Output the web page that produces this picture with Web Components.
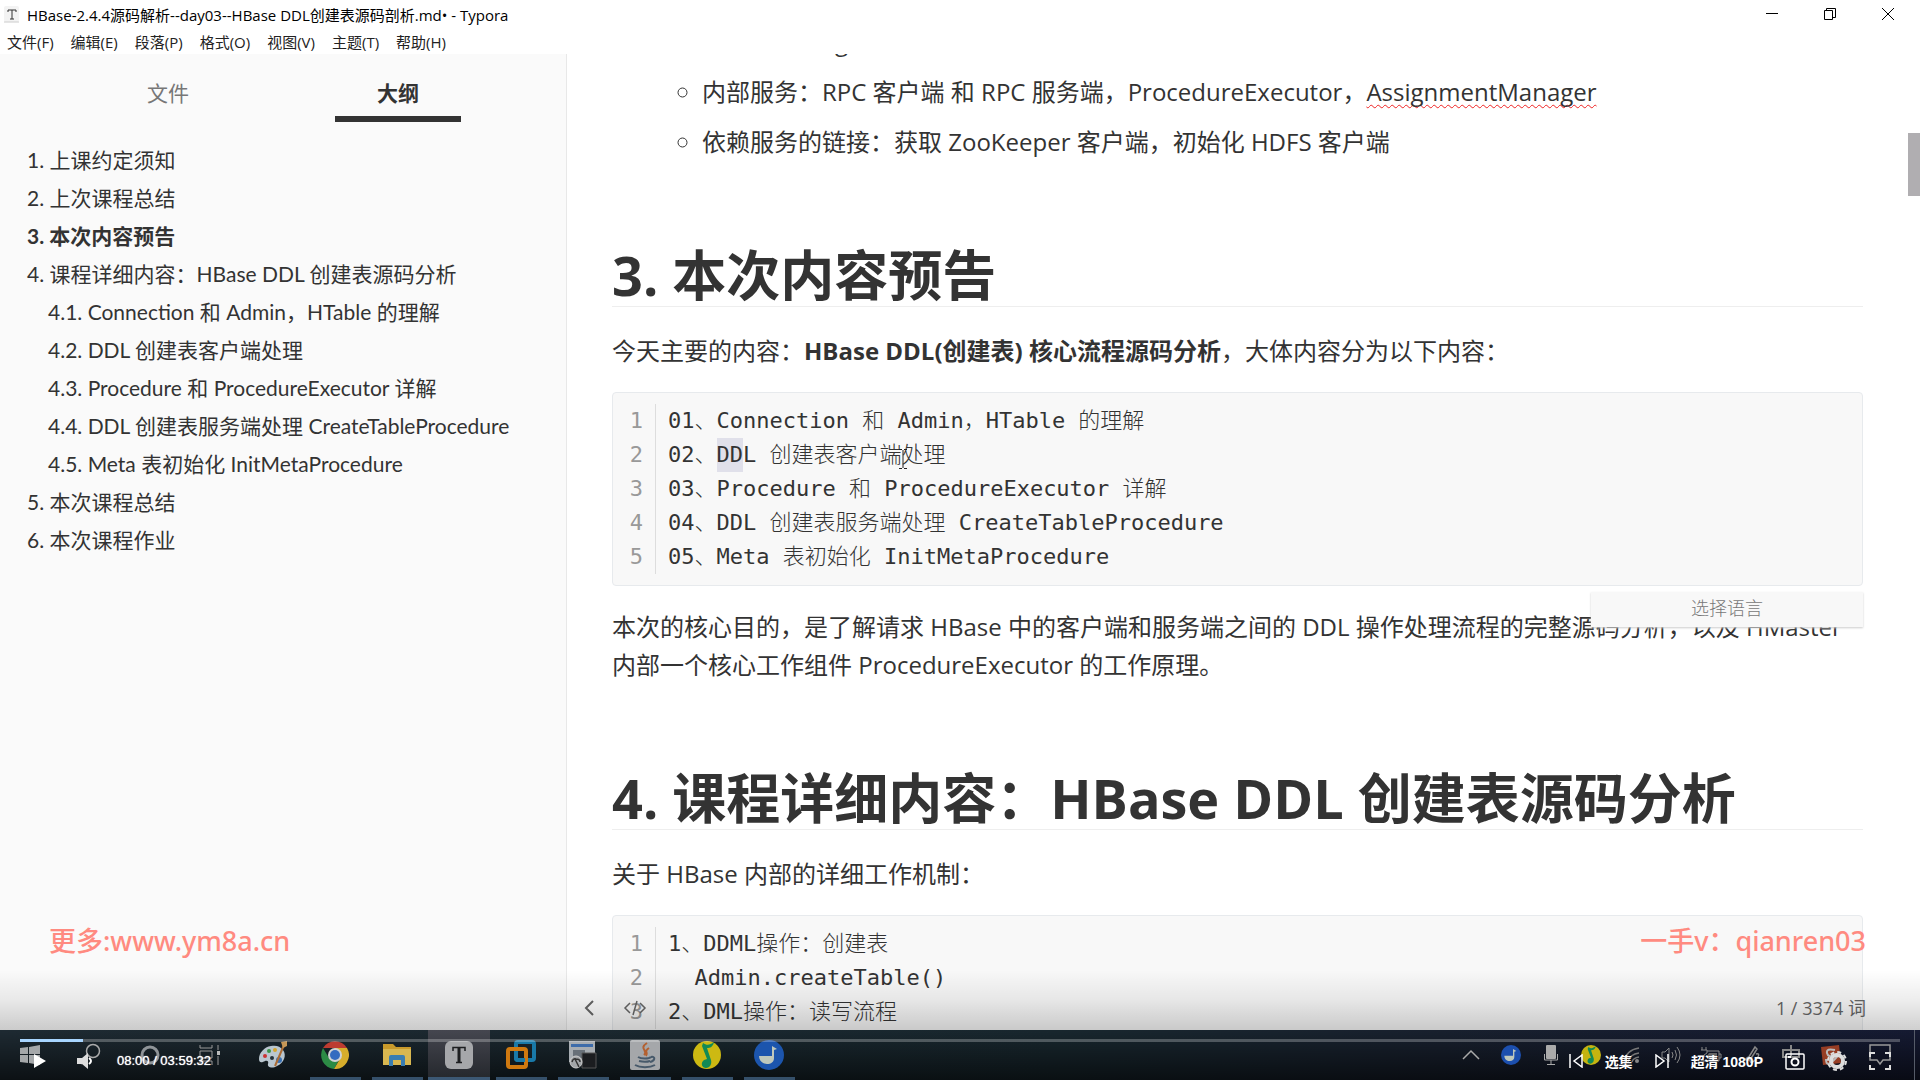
<!DOCTYPE html>
<html lang="zh-CN">
<head>
<meta charset="utf-8">
<title>HBase-2.4.4源码解析--day03--HBase DDL创建表源码剖析.md• - Typora</title>
<style>
  html, body{
    height: 100%;
    margin: 0;
  }

  body{
    overflow: hidden;
    background: #fff;
    color: #333;
    font-family: "Open Sans", "Noto Sans CJK SC", sans-serif;
  }
</style>
</head>
<body>
<video-stage></video-stage>

<script>
class Base extends HTMLElement{
  constructor(){
    super();

    this.attachShadow({ mode: 'open' });
    this.shadowRoot.innerHTML = this.constructor.template;
  }
}

function define(element){
  window.customElements.define(element.is, element);
}


class WindowHeader extends Base{
  static get is(){
    return 'window-header';
  }

  static get template(){
    return `
      <style>
        :host{
          display: block;
          background: #fff;
          color: #000;
          font-size: 15px;
        }

        header, nav, .buttons{
          display: flex;
          align-items: center;
        }

        header{
          height: 28px;
          padding: 0 3px 0 4px;
          gap: 7px;
        }

        h1{
          flex: 1;
          margin: 0;
          font-size: 15px;
          font-weight: 400;
        }

        nav{
          height: 26px;
          padding-left: 7px;
          gap: 17px;
        }

        button{
          border: 0;
          padding: 0;
          background: none;
          font: inherit;
          color: #222;
        }

        .buttons button{
          width: 58px;
          height: 28px;
        }

        svg{
          display: block;
          margin: auto;
        }
      </style>

      <header>
        <svg width="16" height="18" viewBox="0 0 16 18">
          <rect x="0" y="1" width="15" height="16" rx="2" fill="#f3f3f3"/>
          <path d="M0 17h15" stroke="#ccc"/>
          <path d="M4 7V5h8v2M8 5v9M6 14h4" stroke="#333" fill="none"/>
        </svg>
        <h1><slot></slot></h1>
        <div class="buttons">
          <button aria-label="最小化"><svg width="14" height="16"><path d="M1 7.500h12" stroke="#000"/></svg></button>
          <button aria-label="还原"><svg width="14" height="16"><path d="M1.500 4.500h8v9h-8zM3.500 4.500v-2h9v9h-3" stroke="#000" fill="none"/></svg></button>
          <button aria-label="关闭"><svg width="14" height="16"><path d="M1 2l12 12M13 2L1 14" stroke="#000"/></svg></button>
        </div>
      </header>
      <nav><slot name="menu"></slot></nav>
    `;
  }
}


class MenuButton extends Base{
  static get is(){
    return 'menu-button';
  }

  static get template(){
    return `
      <style>
        :host{
          display: block;
        }

        button{
          border: 0;
          padding: 0;
          background: none;
          font: inherit;
          color: #222;
        }
      </style>
      <button><slot></slot></button>
    `;
  }
}


class OutlineItem extends Base{
  static get is(){
    return 'outline-item';
  }

  static get template(){
    return `
      <style>
        :host{
          display: block;
          line-height: 38px;
          white-space: nowrap;
        }

        :host([level="2"]){
          padding-left: 21px;
        }

        :host([active]){
          font-weight: 700;
        }

        a{
          color: inherit;
          text-decoration: none;
        }
      </style>
      <a href="#"><slot></slot></a>
    `;
  }
}


class OutlinePanel extends Base{
  static get is(){
    return 'outline-panel';
  }

  static get template(){
    return `
      <style>
        :host{
          display: block;
          box-sizing: border-box;
          background: #fafafa;
          border-right: 1px solid #e8e8e8;
          font-family: Lato, "Noto Sans CJK SC", sans-serif;
          font-size: 21px;
        }

        .tabs{
          display: flex;
          padding: 18px 53px 0;
          margin-bottom: 19px;
        }

        button{
          flex: 1;
          display: flex;
          flex-direction: column;
          align-items: center;
          gap: 2px;
          border: 0;
          padding: 0;
          background: none;
          font: inherit;
          line-height: 42px;
          color: #777;
        }

        button[aria-selected=true]{
          font-weight: 700;
          color: #333;
        }

        button::after{
          content: '';
          width: 126px;
          height: 6px;
        }

        button[aria-selected=true]::after{
          background: #333;
        }

        .list{
          padding: 0 27px;
        }
      </style>

      <div class="tabs" role="tablist">
        <button role="tab" aria-selected="false">文件</button>
        <button role="tab" aria-selected="true">大纲</button>
      </div>
      <div class="list"><slot></slot></div>
    `;
  }
}


class CodeLine extends Base{
  static get is(){
    return 'code-line';
  }

  static get template(){
    return `
      <style>
        :host{
          display: flex;
          line-height: 34px;
          white-space: pre;
        }

        .num{
          width: 30px;
          padding-right: 12px;
          margin-right: 12px;
          border-right: 1px solid #ddd;
          text-align: right;
          color: #999;
        }

        ::slotted(mark){
          display: inline-block;
          background: #e0e0ea;
          color: inherit;
        }
      </style>
      <span class="num"></span><span><slot></slot></span>
    `;
  }

  connectedCallback(){
    this.shadowRoot.querySelector('.num').innerText = this.getAttribute('n');
  }
}


class CodeFence extends Base{
  static get is(){
    return 'code-fence';
  }

  static get template(){
    return `
      <style>
        :host{
          display: block;
          position: relative;
          margin: 22px 0;
          padding: 11px 0;
          border: 1px solid #e7eaed;
          border-radius: 4px;
          background: #f8f8f8;
          font-family: "DejaVu Sans Mono", "Noto Sans CJK SC", monospace;
          font-size: 22px;
          font-weight: 300;
        }

        /* language picker hangs below the block, over the next paragraph */
        input{
          display: none;
          position: absolute;
          z-index: 1;
          top: calc(100% + 7px);
          right: -1px;
          width: 272px;
          height: 35px;
          box-sizing: border-box;
          border: 0;
          padding: 0 0 4px;
          background: #f8f8f8;
          box-shadow: 0 1px 2px #ccc;
          font: 18px "Open Sans", "Noto Sans CJK SC", sans-serif;
          font-weight: 300;
          text-align: center;
        }

        input::placeholder{
          color: #777;
        }

        .caret{
          display: none;
          position: absolute;
          left: 286px;
          top: 56px;
        }

        :host([focused]) input, :host([focused]) .caret{
          display: block;
        }
      </style>
      <slot></slot>
      <svg class="caret" width="8" height="20"><path d="M0 .5h3M5 .5h3M4 1v18M0 19.500h3M5 19.500h3" stroke="#222" fill="none"/></svg>
      <input placeholder="选择语言" aria-label="选择语言">
    `;
  }
}


class MarkdownEditor extends Base{
  static get is(){
    return 'markdown-editor';
  }

  static get template(){
    return `
      <style>
        :host{
          display: block;
          position: relative;
          overflow: hidden;
          background: #fff;
        }

        article{
          margin: -31px 57px 0 45px;
          font-size: 24px;
          line-height: 38px;
        }

        ul{
          display: flex;
          flex-direction: column;
          gap: 12px;
          margin: 0;
          padding-left: 90px;
          list-style: circle;
        }

        .above{
          padding-left: 133px;
          list-style: none;
        }

        h1{
          margin: 83px 0 25px;
          border-bottom: 1px solid #eee;
          font-size: 54px;
          line-height: 62px;
        }

        p{
          margin: 22px 0;
        }

        u{
          text-decoration: underline wavy #e22 1px;
          text-underline-offset: 3px;
          text-decoration-skip-ink: none;
        }

        .thumb{
          position: absolute;
          right: 0;
          top: 79px;
          width: 12px;
          height: 63px;
          background: #b0aeb1;
        }

        footer{
          position: absolute;
          left: 16px;
          right: 54px;
          bottom: 8px;
          display: flex;
          align-items: center;
          gap: 28px;
          font-size: 18px;
          line-height: 28px;
          color: #666;
        }

        footer button{
          border: 0;
          padding: 0;
          background: none;
        }

        footer svg{
          display: block;
        }

        footer span{
          margin-left: auto;
        }
      </style>

      <article>
        <ul>
          <li class="above">g</li>
          <li>内部服务：RPC 客户端 和 RPC 服务端，ProcedureExecutor，<u>AssignmentManager</u></li>
          <li>依赖服务的链接：获取 ZooKeeper 客户端，初始化 HDFS 客户端</li>
        </ul>

        <h1>3. 本次内容预告</h1>
        <p>今天主要的内容：<b>HBase DDL(创建表) 核心流程源码分析</b>，大体内容分为以下内容：</p>
        <code-fence focused>
          <code-line n="1">01、Connection 和 Admin，HTable 的理解</code-line>
          <code-line n="2">02、<mark>DD</mark>L 创建表客户端处理</code-line>
          <code-line n="3">03、Procedure 和 ProcedureExecutor 详解</code-line>
          <code-line n="4">04、DDL 创建表服务端处理 CreateTableProcedure</code-line>
          <code-line n="5">05、Meta 表初始化 InitMetaProcedure</code-line>
        </code-fence>
        <p>本次的核心目的，是了解请求 HBase 中的客户端和服务端之间的 DDL 操作处理流程的完整源码分析，以及 HMaster<br>内部一个核心工作组件 ProcedureExecutor 的工作原理。</p>

        <h1>4. 课程详细内容：HBase DDL 创建表源码分析</h1>
        <p>关于 HBase 内部的详细工作机制：</p>
        <code-fence>
          <code-line n="1">1、DDML操作：创建表</code-line>
          <code-line n="2">  Admin.createTable()</code-line>
          <code-line n="3">2、DML操作：读写流程</code-line>
        </code-fence>
      </article>

      <div class="thumb"></div>
      <footer>
        <button aria-label="侧边栏"><svg width="12" height="18"><path d="M10 2L3 9l7 7" stroke="#666" stroke-width="2" fill="none"/></svg></button>
        <button aria-label="源代码模式"><svg width="24" height="18"><path d="M7 4L2 9l5 5M17 4l5 5-5 5M14 2L10 16" stroke="#666" stroke-width="1.500" fill="none"/></svg></button>
        <span>1 / 3374 词</span>
      </footer>
    `;
  }
}


class TaskButton extends Base{
  static get is(){
    return 'task-button';
  }

  static get template(){
    return `
      <style>
        :host{
          display: block;
          width: 62px;
        }

        :host([plain]){
          width: 60px;
        }

        :host([tray]){
          width: 40px;
        }

        :host([wide]){
          width: 58px;
        }

        button{
          display: flex;
          align-items: center;
          justify-content: center;
          width: 100%;
          height: 50px;
          border: 0;
          padding: 0;
          background: none;
          box-sizing: border-box;
        }

        :host([running]) button{
          background: linear-gradient(#35506a, #35506a) center bottom / 51px 3px no-repeat;
        }

        :host([active]) button{
          background: linear-gradient(#3c5874, #3c5874) center bottom / 100% 3px no-repeat, linear-gradient(#45464f, #24272c);
        }
      </style>
      <button><slot></slot></button>
    `;
  }

  connectedCallback(){
    this.shadowRoot.querySelector('button').setAttribute('aria-label', this.getAttribute('label'));
  }
}


class TaskBar extends Base{
  static get is(){
    return 'task-bar';
  }

  static get template(){
    return `
      <style>
        :host{
          display: flex;
          height: 50px;
          background: linear-gradient(transparent, rgba(0, 0, 0, .6)), linear-gradient(90deg, #1e2a32, #18272e 55%, #18202e 75%, #151a32);
        }

        .apps{
          display: flex;
          margin-left: 2px;
        }

        .tray{
          display: flex;
          margin-left: auto;
          margin-right: 5px;
          padding-right: 5px;
          border-right: 1px solid #555b68;
        }

        svg{
          display: block;
          fill: none;
        }
      </style>

      <task-button plain label="开始"><svg width="20" height="20" viewBox="0 0 20 20"><path d="M0 3l8-1v7H0zM9 2l11-2v9H9zM0 10h8v8l-8-1zM9 10h11v10L9 18z" fill="#a5a8aa"/></svg></task-button>
      <task-button plain label="搜索"><svg width="24" height="24" viewBox="0 0 24 24"><circle cx="15" cy="8" r="6.500" stroke="#aaa" stroke-width="1.500"/><path d="M10 13l-7 8" stroke="#aaa" stroke-width="1.500"/></svg></task-button>
      <task-button plain label="Cortana"><svg width="22" height="22" viewBox="0 0 22 22"><circle cx="11" cy="11" r="8" stroke="#8f9498" stroke-width="3"/></svg></task-button>
      <task-button plain label="任务视图"><svg width="22" height="22" viewBox="0 0 22 22"><path d="M1 1v3h12V1M1 21v-4h12v4M1 7h12v7H1zM19 1v5M19 12v9" stroke="#999"/><path d="M18 7h3v4h-3z" fill="#bbb"/></svg></task-button>

      <div class="apps">
        <task-button label="画图"><svg width="30" height="30" viewBox="0 0 30 30">
          <path d="M13 6C6 7 1 13 1 19c0 5 4 3 6 2s4 0 3 3 4 5 9 2c7-3 10-11 6-16-3-4-7-5-12-4z" fill="#b9c6cf"/>
          <circle cx="7" cy="16" r="2" fill="#c33"/><circle cx="11" cy="11" r="2" fill="#3a9447"/><circle cx="17" cy="10" r="2" fill="#d5a52d"/><circle cx="21" cy="20" r="3" fill="#3a72b5"/><circle cx="14" cy="18" r="2" fill="#25323a"/>
          <path d="M26 5L17 26" stroke="#ad6d35" stroke-width="2"/><path d="M23 2l6-1v5l-4 2z" fill="#c59757"/>
        </svg></task-button>
        <task-button running label="Chrome"><svg width="28" height="28" viewBox="0 0 28 28">
          <path d="M2 7a14 14 0 0 1 24 0H14z" fill="#bd3b30"/>
          <path d="M2 7a14 14 0 0 0 11 21l6-11-11 0z" fill="#2c8b45"/>
          <path d="M26 7a14 14 0 0 1-13 21l7-12-6-9z" fill="#d6ad2b"/>
          <circle cx="14" cy="14" r="7" fill="#d0d2d4"/><circle cx="14" cy="14" r="5" fill="#356bc0"/>
        </svg></task-button>
        <task-button running label="文件资源管理器"><svg width="28" height="26" viewBox="0 0 28 26">
          <path d="M0 2h10l3 3h15v18H0z" fill="#c99a2b"/><path d="M0 7h28v16H0z" fill="#d8b750"/>
          <path d="M6 24v-9q0-2 2-2h12q2 0 2 2v9h-4v-6h-8v6z" fill="#397db1"/>
        </svg></task-button>
        <task-button active label="Typora"><svg width="28" height="28" viewBox="0 0 28 28">
          <rect width="28" height="28" rx="6" fill="#a6a7aa"/>
          <path d="M8 10V6.500h12V10M11 21.500h6" stroke="#1d1e20" stroke-width="1.500"/><path d="M14 6v15" stroke="#1d1e20" stroke-width="3"/>
        </svg></task-button>
        <task-button running label="VMware"><svg width="30" height="30" viewBox="0 0 30 30">
          <rect x="10" y="2" width="18" height="18" rx="2" stroke="#1979a8" stroke-width="4"/>
          <rect x="2" y="9" width="18" height="18" rx="2" stroke="#cf7910" stroke-width="4"/>
          <path d="M10 13v5q0 2 2 2h7" stroke="#1979a8" stroke-width="4"/>
        </svg></task-button>
        <task-button running label="终端"><svg width="28" height="28" viewBox="0 0 28 28">
          <path d="M0 0h26v21H0z" fill="#a7adb2"/><path d="M2 3h22v3H2z" fill="#3d6caa"/><path d="M4 9h12v8H4z" fill="#687078"/>
          <path d="M13 12h14v15H13z" fill="#1b1d20" stroke="#555"/><circle cx="7" cy="21" r="6" fill="#a3a6a9" stroke="#ccc"/><path d="M3 21q1-4 4-3 4 0 4 3M6 18l4 8" stroke="#333" stroke-width="1.500"/>
        </svg></task-button>
        <task-button running label="Java"><svg width="30" height="30" viewBox="0 0 30 30">
          <rect width="30" height="30" rx="2" fill="#a5a7aa"/>
          <path d="M17 3c-9 6 2 7-3 12M19 8c-6 4 0 4-3 8" stroke="#b4602f" stroke-width="2"/>
          <path d="M8 17c3 2 11 2 13 0M9 21c4 1 8 1 11 0M5 25c5 3 15 3 20 0M21 17c5-1 4 4-1 5" stroke="#47596a" stroke-width="2"/>
        </svg></task-button>
        <task-button running label="QQ音乐"><svg width="30" height="30" viewBox="0 0 30 30">
          <circle cx="15" cy="15" r="14" fill="#cdb912"/>
          <path d="M11 3c4 3 7 2 11-1-1 5-4 6-7 6l4 12c1 4-1 8-5 8s-6-5-2-8l3-1-5-13z" fill="#128a55"/>
        </svg></task-button>
        <task-button running label="音乐"><svg width="30" height="30" viewBox="0 0 30 30">
          <circle cx="15" cy="15" r="15" fill="#1c55ad"/>
          <path d="M5 16h13V6l5 3-3 1v8c0 4-3 6-7 6s-8-3-8-8z" fill="#bfc8bc"/>
        </svg></task-button>
      </div>

      <div class="tray">
        <task-button tray label="显示隐藏的图标"><svg width="18" height="12"><path d="M1 10l8-8 8 8" stroke="#aaa" stroke-width="1.500"/></svg></task-button>
        <task-button tray label="音乐"><svg width="20" height="20" viewBox="0 0 30 30"><circle cx="15" cy="15" r="15" fill="#1c4fae"/><path d="M5 16h13V6l5 3-3 1v8c0 4-3 6-7 6s-8-3-8-8z" fill="#bfc8bc"/></svg></task-button>
        <task-button tray label="麦克风"><svg width="14" height="20"><rect x="2" y="0" width="10" height="14" rx="1" fill="#aaa"/><path d="M.5 9v6h13V9M7 15v4M3 19.500h8" stroke="#aaa"/></svg></task-button>
        <task-button tray label="QQ音乐"><svg width="20" height="20" viewBox="0 0 30 30"><circle cx="15" cy="15" r="15" fill="#c5b410"/><path d="M11 3c4 3 7 2 11-1-1 5-4 6-7 6l4 12c1 4-1 8-5 8s-6-5-2-8l3-1-5-13z" fill="#128a55"/></svg></task-button>
        <task-button tray label="网络"><svg width="18" height="18"><path d="M2 16Q4 4 17 2M6 16q2-8 11-9M10 16q1-4 7-5" stroke="#777" stroke-width="1.500"/><circle cx="15" cy="15" r="2" fill="#888"/></svg></task-button>
        <task-button tray label="音量"><svg width="20" height="18"><path d="M1 6h3l4-4v14l-4-4H1zM11 6q2 3 0 6M14 4q3 5 0 10M16 1q6 8 0 16" stroke="#888"/></svg></task-button>
        <task-button tray label="电池"><svg width="22" height="18"><path d="M7 5h12v10H3v-4M19 8h2v4h-2M2 1v3M6 1v3M1 4h6v3l-3 2v2" stroke="#888"/><path d="M9 7h8v6H7v-3z" fill="#666"/></svg></task-button>
        <task-button tray label="手写笔"><svg width="20" height="20"><path d="M6 15L14 2l2 2-7 11zM4 15q5-6 5 0t8-3q2-4-2-3" stroke="#888" stroke-width="1.500"/></svg></task-button>
        <task-button tray label="输入法"><svg width="20" height="20"><path d="M2 5h16v7H2zM10 0v12" stroke="#888" stroke-width="2"/></svg></task-button>
        <task-button tray label="搜狗输入法"><svg width="20" height="20"><path d="M0 2l18-2 2 18-18 2z" fill="#963d24"/><path d="M14 5Q5 3 6 8t8 2-1 5-8-1" stroke="#bbb" stroke-width="2"/></svg></task-button>
        <task-button wide label="通知"><svg width="22" height="22"><path d="M1 1h20v15h-7l-3 4-3-4H1z" stroke="#999" stroke-width="1.500"/></svg></task-button>
      </div>
    `;
  }
}


class PlayerControls extends Base{
  static get is(){
    return 'player-controls';
  }

  static get template(){
    return `
      <style>
        :host{
          display: block;
          color: #fff;
          font: 13px "Liberation Sans", "Noto Sans CJK SC", sans-serif;
          text-shadow: 0 0 1px #fff;
        }

        .shade{
          height: 60px;
          background: linear-gradient(transparent, rgba(0, 0, 0, .07) 50%, rgba(0, 0, 0, .19));
        }

        .bar{
          height: 50px;
          box-sizing: border-box;
          padding: 9px 20px 0;
        }

        .track{
          height: 3px;
          background: rgba(255, 255, 255, .25);
        }

        .track div{
          width: 63px;
          height: 3px;
          background: #a8d5ff;
        }

        .row{
          display: flex;
          align-items: center;
          height: 37px;
          padding: 0 9px 0 14px;
        }

        button{
          border: 0;
          padding: 0;
          background: none;
          color: inherit;
          font: bold 14px "Liberation Sans", "Noto Sans CJK SC", sans-serif;
        }

        svg{
          display: block;
          fill: none;
          stroke: #fff;
          stroke-width: 2;
        }

        .volume{
          margin: 0 24px 0 31px;
        }

        .right{
          display: flex;
          align-items: center;
          gap: 22px;
          margin-left: auto;
        }
      </style>

      <div class="shade"></div>
      <div class="bar">
        <div class="track"><div></div></div>
        <div class="row">
          <button aria-label="播放"><svg width="12" height="14"><path d="M0 0l12 7-12 7z" fill="#fff" stroke="none"/></svg></button>
          <button class="volume" aria-label="音量"><svg width="16" height="16"><path d="M0 5h5l6-5v16l-6-5H0z" fill="#ddd" stroke="none"/><path d="M12 5q4 3 0 6"/></svg></button>
          <span>08:00 / 03:59:32</span>
          <div class="right">
            <button aria-label="上一集"><svg width="14" height="14"><path d="M1 0v14M13 1L5 7l8 6z" stroke-width="1.500"/></svg></button>
            <button>选集</button>
            <button aria-label="下一集"><svg width="14" height="14"><path d="M13 0v14M1 1l8 6-8 6z" stroke-width="1.500"/></svg></button>
            <button>超清 1080P</button>
            <button aria-label="截图"><svg width="20" height="18"><rect x="1" y="2" width="18" height="15" rx="1" stroke-width="1.500"/><circle cx="10" cy="10" r="3.500"/><path d="M3 5h3"/></svg></button>
            <button aria-label="设置"><svg width="20" height="20" viewBox="0 0 20 20"><circle cx="10" cy="10" r="6" stroke="#ddd" stroke-width="4"/><circle cx="10" cy="10" r="9" stroke="#ddd" stroke-width="2" stroke-dasharray="4 3.068"/></svg></button>
            <button aria-label="全屏"><svg width="22" height="18"><path d="M1 5V1h5M16 1h5v4M21 13v4h-5M6 17H1v-4" stroke="#ddd"/></svg></button>
          </div>
        </div>
      </div>
    `;
  }
}


class VideoStage extends Base{
  static get is(){
    return 'video-stage';
  }

  static get template(){
    return `
      <style>
        :host{
          display: flex;
          flex-direction: column;
          position: relative;
          height: 100vh;
          overflow: hidden;
        }

        main{
          display: flex;
          flex: 1;
          min-height: 0;
        }

        outline-panel{
          flex: none;
          width: 567px;
        }

        markdown-editor{
          flex: 1;
          min-width: 0;
        }

        player-controls{
          position: absolute;
          left: 0;
          right: 0;
          bottom: 0;
        }

        /* stamps burned over the recording */
        .marks{
          position: absolute;
          left: 49px;
          right: 54px;
          bottom: 121px;
          display: flex;
          justify-content: space-between;
          font-family: "Noto Sans", "Noto Sans CJK SC", sans-serif;
          font-size: 27px;
          font-weight: 500;
          line-height: 36px;
          color: #ff8a80;
        }
      </style>

      <window-header>
        HBase-2.4.4源码解析--day03--HBase DDL创建表源码剖析.md• - Typora
        <menu-button slot="menu">文件(F)</menu-button>
        <menu-button slot="menu">编辑(E)</menu-button>
        <menu-button slot="menu">段落(P)</menu-button>
        <menu-button slot="menu">格式(O)</menu-button>
        <menu-button slot="menu">视图(V)</menu-button>
        <menu-button slot="menu">主题(T)</menu-button>
        <menu-button slot="menu">帮助(H)</menu-button>
      </window-header>

      <main>
        <outline-panel>
          <outline-item>1. 上课约定须知</outline-item>
          <outline-item>2. 上次课程总结</outline-item>
          <outline-item active>3. 本次内容预告</outline-item>
          <outline-item>4. 课程详细内容：HBase DDL 创建表源码分析</outline-item>
          <outline-item level="2">4.1. Connection 和 Admin，HTable 的理解</outline-item>
          <outline-item level="2">4.2. DDL 创建表客户端处理</outline-item>
          <outline-item level="2">4.3. Procedure 和 ProcedureExecutor 详解</outline-item>
          <outline-item level="2">4.4. DDL 创建表服务端处理 CreateTableProcedure</outline-item>
          <outline-item level="2">4.5. Meta 表初始化 InitMetaProcedure</outline-item>
          <outline-item>5. 本次课程总结</outline-item>
          <outline-item>6. 本次课程作业</outline-item>
        </outline-panel>
        <markdown-editor></markdown-editor>
      </main>

      <task-bar></task-bar>
      <div class="marks"><span>更多:www.ym8a.cn</span><span>一手v：qianren03</span></div>
      <player-controls></player-controls>
    `;
  }
}


[
  WindowHeader, MenuButton, OutlineItem, OutlinePanel, CodeLine, CodeFence,
  MarkdownEditor, TaskButton, TaskBar, PlayerControls, VideoStage
].forEach(define);
</script>
</body>
</html>
